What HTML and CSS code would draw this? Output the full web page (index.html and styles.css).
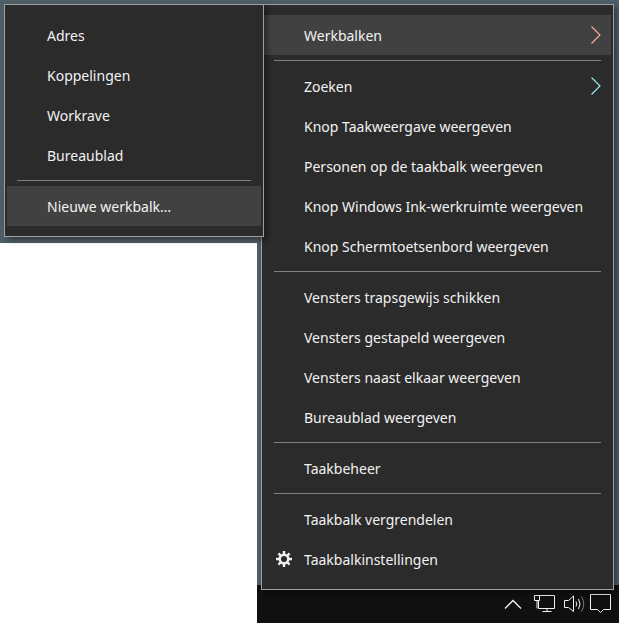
FILE: index.html
```html
<!DOCTYPE html>
<html lang="nl">
<head>
  <meta charset="UTF-8" />
  <meta name="viewport" content="width=device-width, initial-scale=1.0"/>
  <title>Taakbalk menu</title>
  <link rel="stylesheet" href="styles.css">
</head>
<body>
  <div class="screen">
    <div class="desktop"></div>
    <div class="window"></div>
    <div class="taskbar">
      <svg class="tray-icon caret" width="18" height="10" viewBox="0 0 18 10"><path d="M1 9.5 9 1.5 17 9.5"/></svg>
      <svg class="tray-icon network" width="21" height="18" viewBox="0 0 21 18">
        <path d="M4.5 .5H20.500V13.500H4.500V6"/>
        <path d="M.5 .5H5.500V5.500H.5ZM3 5.500V13.500M8.500 16.500H17.500M13 13.500V16.500"/>
      </svg>
      <svg class="tray-icon speaker" width="21" height="18" viewBox="0 0 21 18">
        <path d="M.5 5.500H4.500L9.500 1V16.500L4.500 12.500H.5Z"/>
        <path d="M12 6.500Q13.500 9 12 11.500M14.500 4Q17.500 9 14.500 14" />
        <path class="faint" d="M17.500 1.500Q22 9 17.500 16.500"/>
      </svg>
      <svg class="tray-icon notes" width="21" height="20" viewBox="0 0 21 20">
        <path d="M.5 .5H20.500V15.500H13.500L10.500 18.500 7.500 15.500H.5Z"/>
      </svg>
    </div>

    <ul class="menu menu-main">
      <li class="item active">Werkbalken
        <svg class="chevron warm" width="10" height="18" viewBox="0 0 10 18"><path d="M.5 .5 9 9 .5 17.500"/></svg>
      </li>
      <li class="sep"></li>
      <li class="item">Zoeken
        <svg class="chevron cool" width="10" height="18" viewBox="0 0 10 18"><path d="M.5 .5 9 9 .5 17.500"/></svg>
      </li>
      <li class="item">Knop Taakweergave weergeven</li>
      <li class="item">Personen op de taakbalk weergeven</li>
      <li class="item">Knop Windows Ink-werkruimte weergeven</li>
      <li class="item">Knop Schermtoetsenbord weergeven</li>
      <li class="sep"></li>
      <li class="item">Vensters trapsgewijs schikken</li>
      <li class="item">Vensters gestapeld weergeven</li>
      <li class="item">Vensters naast elkaar weergeven</li>
      <li class="item">Bureaublad weergeven</li>
      <li class="sep"></li>
      <li class="item">Taakbeheer</li>
      <li class="sep"></li>
      <li class="item">Taakbalk vergrendelen</li>
      <li class="item">
        <svg class="gear" width="16" height="16" viewBox="-8 -8 16 16">
          <circle r="4.300"/>
          <path d="M0-8V-5M0 8V5M-8 0H-5M8 0H5M-5.600-5.600-3.500-3.500M5.600 5.600 3.500 3.500M-5.600 5.600-3.500 3.500M5.600-5.600 3.500-3.500"/>
        </svg>
        Taakbalkinstellingen
      </li>
    </ul>

    <ul class="menu menu-sub">
      <li class="item">Adres</li>
      <li class="item">Koppelingen</li>
      <li class="item">Workrave</li>
      <li class="item">Bureaublad</li>
      <li class="sep"></li>
      <li class="item active">Nieuwe werkbalk…</li>
    </ul>
  </div>
</body>
</html>
```

FILE: styles.css
```css
body {
  margin: 0;
  background: #4f5f68;
  font-family: "Noto Sans", "Open Sans", Arial, sans-serif;
  font-size: 14px;
}

.screen {
  position: relative;
  width: 619px;
  height: 623px;
  overflow: hidden;
  display: grid;
  grid-template-columns: 257px 1fr;
  grid-template-rows: 243px 342px 38px;
}

.desktop {
  grid-column: 1 / 3;
  grid-row: 1;
}

.window {
  grid-column: 1;
  grid-row: 2 / 4;
  background: white;
}

.taskbar {
  grid-column: 2;
  grid-row: 3;
  background: #101010;
  display: flex;
  align-items: center;
  justify-content: flex-end;
  padding-right: 8px;
}

.tray-icon {
  display: block;
  fill: none;
  stroke: #f2f2f2;
  stroke-width: 1;
}

.caret {
  margin-right: 12px;
  stroke-width: 1.300;
}

.network {
  margin-right: 9px;
}

.speaker {
  margin-right: 5px;
}

.faint {
  stroke: #777;
}

.menu {
  position: absolute;
  box-sizing: border-box;
  margin: 0;
  padding: 10px 2px;
  list-style: none;
  background: #2b2b2b;
  border: 1px solid #a0a0a0;
  box-shadow: 3px 3px 6px rgba(0, 0, 0, 0.4);
  color: #f2f2f2;
}

.menu-main {
  left: 261px;
  top: 4px;
  width: 353px;
  height: 586px;
}

.menu-sub {
  left: 4px;
  top: 4px;
  width: 260px;
  height: 233px;
}

.item {
  position: relative;
  height: 40px;
  line-height: 41px;
  padding-left: 40px;
  white-space: nowrap;
}

.active {
  background: #414141;
}

.sep {
  height: 1px;
  margin: 5px 10px;
  background: #808080;
}

.chevron {
  position: absolute;
  right: 10px;
  top: 11px;
  fill: none;
  stroke-width: 1.100;
}

.warm {
  stroke: #ffb09c;
}

.cool {
  stroke: #9ff0f0;
}

.gear {
  position: absolute;
  left: 12px;
  top: 12px;
  fill: none;
  stroke: #f2f2f2;
  stroke-width: 2.400;
}
```
